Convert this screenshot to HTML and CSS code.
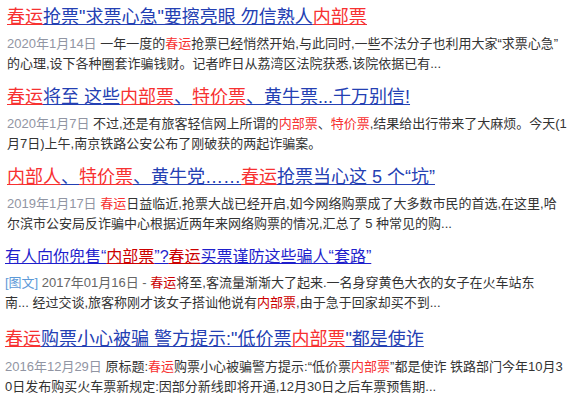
FILE: index.html
```html
<!DOCTYPE html>
<html lang="zh-CN">
<head>
<meta charset="utf-8">
<title>春运抢票</title>
<link rel="stylesheet" href="styles.css">
</head>
<body>
<div class="results">
  <div class="result">
    <h3 class="title"><a href="#"><em>春运</em>抢票"求票心急"要擦亮眼 勿信熟人<em>内部票</em></a></h3>
    <p class="abs"><span class="date">2020年1月14日</span> 一年一度的<em>春运</em>抢票已经悄然开始,与此同时,一些不法分子也利用大家“求票心急”<br>的心理,设下各种圈套诈骗钱财。记者昨日从荔湾区法院获悉,该院依据已有...</p>
  </div>
  <div class="result">
    <h3 class="title"><a href="#"><em>春运</em>将至 这些<em>内部票</em>、<em>特价票</em>、黄牛票...千万别信!</a></h3>
    <p class="abs"><span class="date">2020年1月7日</span> 不过,还是有旅客轻信网上所谓的<em>内部票</em>、<em>特价票</em>,结果给出行带来了大麻烦。今天(1<br>月7日)上午,南京铁路公安公布了刚破获的两起诈骗案。</p>
  </div>
  <div class="result">
    <h3 class="title"><a href="#"><em>内部人</em>、<em>特价票</em>、黄牛党……<em>春运</em>抢票当心这 5 个“坑”</a></h3>
    <p class="abs"><span class="date">2019年1月17日</span> <em>春运</em>日益临近,抢票大战已经开启,如今网络购票成了大多数市民的首选,在这里,哈<br>尔滨市公安局反诈骗中心根据近两年来网络购票的情况,汇总了 5 种常见的购...</p>
  </div>
  <div class="result old">
    <h3 class="title"><a href="#">有人向你兜售“<em>内部票</em>”?<em>春运</em>买票谨防这些骗人“套路”</a></h3>
    <p class="abs"><span class="tag">[图文]</span> <span class="date">2017年01月16日 -</span> <em>春运</em>将至,客流量渐渐大了起来.一名身穿黄色大衣的女子在火车站东<br>南... 经过交谈,旅客称刚才该女子搭讪他说有<em>内部票</em>,由于急于回家却买不到...</p>
  </div>
  <div class="result last">
    <h3 class="title"><a href="#"><em>春运</em>购票小心被骗 警方提示:"低价票<em>内部票</em>"都是使诈</a></h3>
    <p class="abs"><span class="date">2016年12月29日</span> 原标题:<em>春运</em>购票小心被骗警方提示:“低价票<em>内部票</em>”都是使诈 铁路部门今年10月3<br>0日发布购买火车票新规定:因部分新线即将开通,12月30日之后车票预售期...</p>
  </div>
</div>
</body>
</html>
```

FILE: styles.css
```css
html, body {
  margin: 0;
  padding: 0;
  background: #ffffff;
}

body {
  font-family: "Liberation Sans", "Noto Sans CJK SC", sans-serif;
  color: #333333;
}

.results {
  display: flex;
  flex-direction: column;
  padding-top: 5px;
}

.result {
  padding-left: 7px;
  margin-bottom: 11px;
}

.result.old {
  padding-left: 5px;
}

.result.last {
  padding-left: 5px;
  margin-top: 3px;
}

.title {
  margin: 0;
  font-size: 18px;
  font-weight: normal;
  line-height: 24px;
  white-space: nowrap;
}

.title a {
  color: #2440b3;
  text-decoration: underline;
}

.title em {
  font-style: normal;
  color: #f73131;
  text-decoration: underline;
}

.abs {
  margin: 5px 0 0 0;
  font-size: 13px;
  line-height: 20px;
  white-space: nowrap;
  color: #333333;
}

.abs em {
  font-style: normal;
  color: #f73131;
}

.date {
  color: #9195a3;
}

.old .title {
  font-size: 16px;
}

.old .title a {
  color: #1f1fcc;
}

.old .title em {
  color: #cc0000;
}

.old .abs {
  margin-top: 4px;
}

.old .abs em {
  color: #cc0000;
}

.old .date {
  color: #666666;
}

.tag {
  color: #5d9ad8;
}

.last .abs {
  margin-top: 6px;
}
```
